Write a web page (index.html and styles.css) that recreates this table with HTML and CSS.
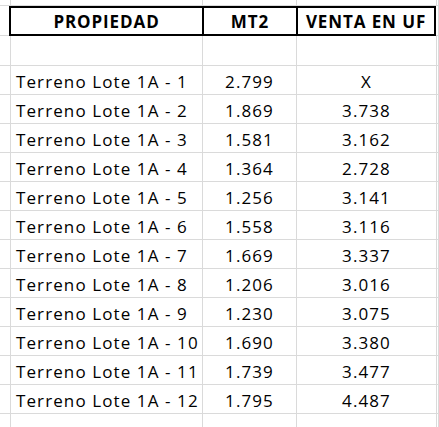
FILE: index.html
```html
<!DOCTYPE html>
<html lang="es">
<head>
<meta charset="utf-8">
<title>Propiedades</title>
<link rel="stylesheet" href="styles.css">
</head>
<body>
<div class="sheet">
  <div class="row top"><div class="c"></div><div class="c"></div><div class="c"></div><div class="c"></div><div class="c"></div></div>
  <div class="row head">
    <div class="c a"></div>
    <div class="c h first">PROPIEDAD</div>
    <div class="c h">MT2</div>
    <div class="c h">VENTA EN UF</div>
    <div class="c e"></div>
  </div>
  <div class="row blank"><div class="c"></div><div class="c"></div><div class="c"></div><div class="c"></div><div class="c"></div></div>
  <div class="row"><div class="c"></div><div class="c name">Terreno Lote 1A - 1</div><div class="c num">2.799</div><div class="c num">X</div><div class="c"></div></div>
  <div class="row"><div class="c"></div><div class="c name">Terreno Lote 1A - 2</div><div class="c num">1.869</div><div class="c num">3.738</div><div class="c"></div></div>
  <div class="row"><div class="c"></div><div class="c name">Terreno Lote 1A - 3</div><div class="c num">1.581</div><div class="c num">3.162</div><div class="c"></div></div>
  <div class="row"><div class="c"></div><div class="c name">Terreno Lote 1A - 4</div><div class="c num">1.364</div><div class="c num">2.728</div><div class="c"></div></div>
  <div class="row"><div class="c"></div><div class="c name">Terreno Lote 1A - 5</div><div class="c num">1.256</div><div class="c num">3.141</div><div class="c"></div></div>
  <div class="row"><div class="c"></div><div class="c name">Terreno Lote 1A - 6</div><div class="c num">1.558</div><div class="c num">3.116</div><div class="c"></div></div>
  <div class="row"><div class="c"></div><div class="c name">Terreno Lote 1A - 7</div><div class="c num">1.669</div><div class="c num">3.337</div><div class="c"></div></div>
  <div class="row"><div class="c"></div><div class="c name">Terreno Lote 1A - 8</div><div class="c num">1.206</div><div class="c num">3.016</div><div class="c"></div></div>
  <div class="row"><div class="c"></div><div class="c name">Terreno Lote 1A - 9</div><div class="c num">1.230</div><div class="c num">3.075</div><div class="c"></div></div>
  <div class="row"><div class="c"></div><div class="c name">Terreno Lote 1A - 10</div><div class="c num">1.690</div><div class="c num">3.380</div><div class="c"></div></div>
  <div class="row"><div class="c"></div><div class="c name">Terreno Lote 1A - 11</div><div class="c num">1.739</div><div class="c num">3.477</div><div class="c"></div></div>
  <div class="row"><div class="c"></div><div class="c name">Terreno Lote 1A - 12</div><div class="c num">1.795</div><div class="c num">4.487</div><div class="c"></div></div>
  <div class="row"><div class="c"></div><div class="c"></div><div class="c"></div><div class="c"></div><div class="c"></div></div>
</div>
</body>
</html>
```
FILE: styles.css
```css
html, body {
  margin: 0;
  padding: 0;
  background: #ffffff;
}

.sheet {
  width: 439px;
  height: 427px;
  overflow: hidden;
  font-family: "Open Sans", Lato, sans-serif;
  font-size: 17px;
  letter-spacing: 1.1px;
  color: #000000;
}

.row {
  display: grid;
  grid-template-columns: 11px 192px 94px 140px 1fr;
  height: 29px;
}

.c {
  box-sizing: border-box;
  border-right: 1px solid #dadada;
  border-bottom: 1px solid #dadada;
  display: flex;
  align-items: flex-end;
  line-height: 1;
  padding-bottom: 4px;
  white-space: nowrap;
}

.top {
  height: 6px;
}

.blank {
  height: 30px;
}

.head {
  height: 30px;
  grid-template-columns: 9px 195px 94px 138px 1fr;
}

.head .a {
  border-right: none;
}

.head .h {
  border-top: 2px solid #000;
  border-bottom: 2px solid #000;
  border-right: 2px solid #000;
  justify-content: center;
  font-weight: 700;
  letter-spacing: 0.9px;
  color: #000;
}

.head .first {
  border-left: 2px solid #000;
}

.name {
  padding-left: 5px;
}

.num {
  justify-content: center;
}
```
